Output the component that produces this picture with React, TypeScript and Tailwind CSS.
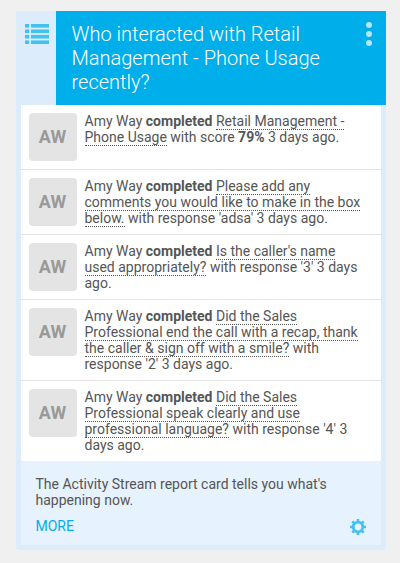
const activities = [
  {
    target: 'Retail Management - Phone Usage',
    result: (
      <>
        with score <b>79%</b>
      </>
    ),
  },
  { target: 'Please add any comments you would like to make in the box below.', result: <>with response 'adsa'</> },
  { target: "Is the caller's name used appropriately?", result: <>with response '3'</> },
  {
    target: 'Did the Sales Professional end the call with a recap, thank the caller & sign off with a smile?',
    result: <>with response '2'</>,
  },
  {
    target: 'Did the Sales Professional speak clearly and use professional language?',
    result: <>with response '4'</>,
  },
];

function ListIcon() {
  return (
    <svg width="24" height="20" viewBox="0 0 24 20" fill="#43c2f0">
      {[0, 5.5, 10.9, 16.4].map((y) => (
        <g key={y}>
          <rect x="0" y={y} width="4.2" height="3.6" />
          <rect x="6" y={y} width="18" height="3.6" />
        </g>
      ))}
    </svg>
  );
}

function GearIcon() {
  return (
    <svg width="16" height="16" viewBox="0 0 16 16" fill="none" stroke="#43c2f0">
      <circle cx="8" cy="8" r="4.8" strokeWidth="2.8" />
      <path
        strokeWidth="2.6"
        d="M8 0v3M8 13v3M0 8h3M13 8h3M2.3 2.3l2 2M11.7 11.7l2 2M2.3 13.7l2-2M11.7 4.3l2-2"
      />
    </svg>
  );
}

export default function App() {
  return (
    <div className="min-h-screen bg-[#f0f0f0] pl-[15.5px] pt-[11px] font-[Roboto,sans-serif] text-sm leading-4 text-[#555]">
      <div className="w-[370px] rounded-b-[4px] bg-[#dcecfa] pb-[5px]">
        {/* Header */}
        <div className="flex h-[94px]">
          <div className="w-10 shrink-0 pl-[9.5px] pt-[13px]">
            <ListIcon />
          </div>
          <div className="flex flex-1 justify-between bg-[#00aeea] pl-4 pr-[13.5px] pt-[11px]">
            <h2 className="w-[264px] text-xl leading-6 font-light text-white">
              Who interacted with Retail Management - Phone Usage recently?
            </h2>
            <div className="flex flex-col gap-[3px]">
              <span className="size-1.5 rounded-full bg-white/70" />
              <span className="size-1.5 rounded-full bg-white/70" />
              <span className="size-1.5 rounded-full bg-white/70" />
            </div>
          </div>
        </div>

        {/* Activity */}
        <ul className="mx-[5px] divide-y divide-[#e3e3e3] bg-white">
          {activities.map((activity) => (
            <li key={activity.target} className="flex gap-2 p-2">
              <div className="flex size-12 shrink-0 items-center justify-center rounded-[4px] bg-[#e4e4e4] text-lg font-bold text-[#999]">
                AW
              </div>
              <p className="w-[280px]">
                Amy Way <b>completed</b>{' '}
                <a className="border-b border-dotted border-[#555]">{activity.target}</a> {activity.result} 3 days ago.
              </p>
            </li>
          ))}
        </ul>

        {/* Footer */}
        <div className="mx-[5px] h-[84px] bg-[#e6f2fe] pl-[15px] pr-[14.5px] pt-[15px]">
          <p>The Activity Stream report card tells you what's happening now.</p>
          <div className="mt-2.5 flex justify-between">
            <a className="text-[#00aeea]">MORE</a>
            <div className="pt-px">
              <GearIcon />
            </div>
          </div>
        </div>
      </div>
    </div>
  );
}
